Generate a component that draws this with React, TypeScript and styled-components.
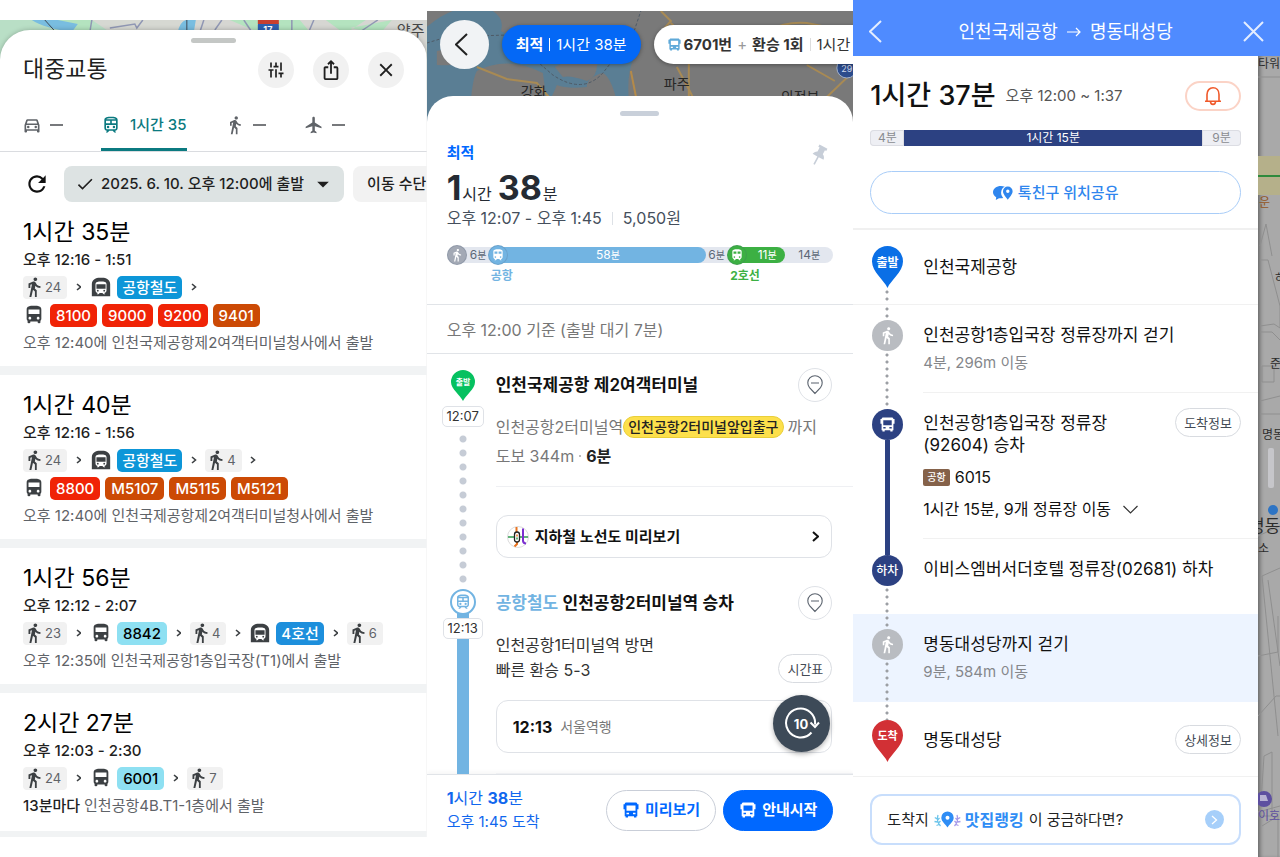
import React from 'react';
import styled, { createGlobalStyle, css } from 'styled-components';
import {
  MdDirectionsWalk,
  MdDirectionsBus,
  MdSubway,
  MdOutlineDirectionsCar,
  MdOutlineTrain,
  MdTrain,
  MdFlight,
  MdRefresh,
  MdCheck,
  MdArrowDropDown,
  MdTune,
  MdIosShare,
  MdClose,
} from 'react-icons/md';

const GlobalStyle = createGlobalStyle`
  *, *::before, *::after { box-sizing: border-box; }
  body {
    margin: 0;
    background: #fff;
    color: #111;
    font-family: Inter, "Noto Sans CJK KR", sans-serif;
    font-size: 15px;
    line-height: 24px;
  }
  button {
    font: inherit;
    color: inherit;
    margin: 0;
    padding: 0;
    border: 0;
    background: none;
    cursor: pointer;
    white-space: nowrap;
  }
  a { color: inherit; text-decoration: none; }
  h1, h2, h3, p, ul, ol { margin: 0; padding: 0; font: inherit; list-style: none; }
  svg { display: block; flex: none; }
`;

const Board = styled.main`
  display: grid;
  grid-template-columns: repeat(3, minmax(0, 1fr));
  min-height: 100vh;
`;

/* ---------- shared ---------- */

const Layers = styled.section<{ $top: number }>`
  display: grid;
  grid-template-columns: minmax(0, 1fr);
  align-content: start;
  padding-top: ${(p) => p.$top}px;
  overflow: hidden;
  > * { grid-area: 1 / 1; }
`;

const MapBand = styled.div<{ $height: number }>`
  height: ${(p) => p.$height}px;
  overflow: hidden;
  svg { width: 100%; height: 100%; }
`;

const Grip = styled.div<{ $color: string; $width: number }>`
  width: ${(p) => p.$width}px;
  height: 5px;
  border-radius: 3px;
  background: ${(p) => p.$color};
  margin: 0 auto;
`;

/* ---------- first panel: route list ---------- */

const ListSheet = styled.div`
  background: #fff;
  margin-top: 10px;
  padding-top: 8px;
  border-radius: 30px 30px 0 0;
  box-shadow: 0 0 5px rgba(0, 0, 0, 0.25);
  clip-path: inset(-10px 0 0 0);
`;

const ListHeader = styled.header`
  display: flex;
  align-items: center;
  gap: 19px;
  padding: 9px 23px 0;
  h1 { flex: 1; padding-bottom: 3px; font-size: 23px; line-height: 32px; color: #1f1f1f; }
`;

const RoundButton = styled.button`
  display: grid;
  place-items: center;
  width: 36px;
  height: 36px;
  border-radius: 50%;
  background: #f1f1f1;
  color: #1f1f1f;
  font-size: 22px;
`;

const Upright = styled.span`
  display: block;
  transform: rotate(90deg);
`;

const ModeTabs = styled.nav`
  display: flex;
  gap: 38px;
  padding: 12px 22px 0;
  border-bottom: 1px solid #dadce0;
`;

const ModeTab = styled.button<{ $active?: boolean }>`
  display: flex;
  align-items: center;
  gap: ${(p) => (p.$active ? 9 : 8)}px;
  height: 51px;
  padding-top: 2px;
  color: ${(p) => (p.$active ? '#0b7a80' : '#5f6368')};
  border-bottom: 3px solid ${(p) => (p.$active ? '#0b7a80' : 'transparent')};
  font-size: 15px;
  font-weight: 500;
  svg { font-size: 20px; }
`;

const Dash = styled.i`
  width: 13px;
  height: 2px;
  background: #77797c;
`;

const FilterRow = styled.div`
  display: flex;
  align-items: center;
  padding: 14px 0 0 24px;
  overflow: hidden;
`;

const RefreshButton = styled.button`
  font-size: 26px;
  margin-right: 14px;
`;

const FilterChip = styled.button<{ $selected?: boolean }>`
  display: flex;
  align-items: center;
  flex: none;
  height: 36px;
  margin-right: 9px;
  padding: 0 ${(p) => (p.$selected ? 7 : 14)}px 0 ${(p) => (p.$selected ? 11 : 14)}px;
  border-radius: 8px;
  background: ${(p) => (p.$selected ? '#dde3e3' : '#f2f2f2')};
  color: #1f1f1f;
  font-weight: 500;
  svg:first-child { font-size: 20px; margin-right: 6px; }
  svg:last-child { font-size: 28px; margin-left: 5px; }
`;

const Route = styled.li`
  padding: 14px 23px 10px;
  border-bottom: 9px solid #f1f3f4;
  &:last-child { border-bottom-width: 6px; padding-bottom: 12px; }
`;

const RouteTime = styled.h2`
  font-size: 23px;
  line-height: 32px;
  color: #000;
`;

const RouteSpan = styled.p`
  color: #1f1f1f;
  font-weight: 500;
  margin-bottom: 1px;
`;

const LegRow = styled.div`
  display: flex;
  align-items: center;
  height: 28px;
  color: #3c4043;
`;

const WalkTag = styled.span`
  display: flex;
  align-items: center;
  height: 23px;
  padding: 0 6px 0 0;
  border-radius: 4px;
  background: #f1f1f1;
  color: #5f6368;
  font-size: 13px;
  svg { font-size: 22px; color: #3c4043; }
`;

const LegArrow = styled.span`
  display: grid;
  place-items: center;
  width: 23px;
`;

const Vehicle = styled.span`
  display: flex;
  align-items: center;
  gap: 5px;
  > svg { font-size: 22px; }
`;

const tones = {
  red: ['#f02306', '#fff'],
  orange: ['#cc4a05', '#fff'],
  rail: ['#0d96d8', '#fff'],
  line4: ['#1d8fdc', '#fff'],
  sky: ['#8ee0f2', '#000'],
};

const LineTag = styled.span<{ $tone: keyof typeof tones; $named: boolean }>`
  height: 23px;
  padding: 0 ${(p) => (p.$named ? 5 : 6)}px;
  border-radius: 5px;
  font-size: 15px;
  line-height: 23px;
  font-weight: 500;
  white-space: nowrap;
  background: ${(p) => tones[p.$tone][0]};
  color: ${(p) => tones[p.$tone][1]};
`;

const RouteNote = styled.p`
  padding-top: 1px;
  line-height: 26px;
  color: #5f6368;
  strong { font-weight: 500; color: #1f1f1f; }
`;

const Chevron = ({ size = 9, stroke = 1.6, flip = false }: { size?: number; stroke?: number; flip?: boolean }) => (
  <svg width={size / 2 + 2} height={size + 1} viewBox={`0 0 ${size / 2 + 2} ${size + 1}`} fill="none" stroke="currentColor" strokeWidth={stroke}>
    <path
      d={
        flip
          ? `M${size / 2 + 1} 1 L1 ${(size + 1) / 2} L${size / 2 + 1} ${size}`
          : `M1 1 L${size / 2 + 1} ${(size + 1) / 2} L1 ${size}`
      }
    />
  </svg>
);

type Leg =
  | { kind: 'walk'; min: number }
  | { kind: 'bus' | 'subway'; lines: [string, keyof typeof tones][] };

interface RouteData {
  total: string;
  span: string;
  rows: Leg[][];
  lead?: string;
  note: string;
}

const routes: RouteData[] = [
  {
    total: '1시간 35분',
    span: '오후 12:16 - 1:51',
    rows: [
      [{ kind: 'walk', min: 24 }, { kind: 'subway', lines: [['공항철도', 'rail']] }],
      [{ kind: 'bus', lines: [['8100', 'red'], ['9000', 'red'], ['9200', 'red'], ['9401', 'orange']] }],
    ],
    note: '오후 12:40에 인천국제공항제2여객터미널청사에서 출발',
  },
  {
    total: '1시간 40분',
    span: '오후 12:16 - 1:56',
    rows: [
      [{ kind: 'walk', min: 24 }, { kind: 'subway', lines: [['공항철도', 'rail']] }, { kind: 'walk', min: 4 }],
      [{ kind: 'bus', lines: [['8800', 'red'], ['M5107', 'orange'], ['M5115', 'orange'], ['M5121', 'orange']] }],
    ],
    note: '오후 12:40에 인천국제공항제2여객터미널청사에서 출발',
  },
  {
    total: '1시간 56분',
    span: '오후 12:12 - 2:07',
    rows: [
      [
        { kind: 'walk', min: 23 },
        { kind: 'bus', lines: [['8842', 'sky']] },
        { kind: 'walk', min: 4 },
        { kind: 'subway', lines: [['4호선', 'line4']] },
        { kind: 'walk', min: 6 },
      ],
    ],
    note: '오후 12:35에 인천국제공항1층입국장(T1)에서 출발',
  },
  {
    total: '2시간 27분',
    span: '오후 12:03 - 2:30',
    rows: [[{ kind: 'walk', min: 24 }, { kind: 'bus', lines: [['6001', 'sky']] }, { kind: 'walk', min: 7 }]],
    lead: '13분마다',
    note: '인천공항4B.T1-1층에서 출발',
  },
];

const LegView = ({ leg }: { leg: Leg }) =>
  leg.kind === 'walk' ? (
    <WalkTag>
      <MdDirectionsWalk />
      {leg.min}
    </WalkTag>
  ) : (
    <Vehicle>
      {leg.kind === 'bus' ? <MdDirectionsBus /> : <MdSubway />}
      {leg.lines.map(([name, tone]) => (
        <LineTag key={name} $tone={tone} $named={leg.kind === 'subway'}>{name}</LineTag>
      ))}
    </Vehicle>
  );

const RouteList = () => (
  <Layers $top={20}>
    <MapBand $height={70}>
      <svg viewBox="0 0 427 70" preserveAspectRatio="xMidYMin slice" aria-hidden="true">
        <rect width="427" height="70" fill="#b9dfc6" />
        <path d="M92 0 L212 0 L212 12 L110 12Z" fill="#d6d8d2" />
        <path d="M58 0 H92 V12 H80Z" fill="#b4e3bf" />
        <path d="M195 0 H427 V70 H195Z" fill="#d6d6d2" />
        <path d="M32 0 Q44 8 72 12 L78 4 L58 0Z M178 12 Q180 2 186 0 L196 0 L194 12Z" fill="#79bde0" />
        <path d="M230 0 L258 12 H310 L300 0Z M326 0 L345 14 L366 0Z M350 8 L392 0 L380 14Z" fill="#b4e3bf" />
        <path d="M92 0 L90 12 M110 8 L135 4 L137 8 L143 0 M200 12 L204 0 M292 0 V14 M308 14 L314 0 M360 12 L378 0 M215 10 L222 0 M244 0 L252 12" fill="none" stroke="#9097b4" strokeWidth="1.5" />
        <path d="M187 0 V12 M45 0 L54 10" stroke="#3f4a55" />
        <rect x="258" y="2" width="21" height="14" rx="3" fill="#2e5fb0" />
        <rect x="258" y="0" width="21" height="4" fill="#c8402f" />
        <text x="268" y="13" fontSize="9" fontWeight="700" textAnchor="middle" fill="#fff">17</text>
        <text x="397" y="16" fontSize="15" fill="#474747">양주</text>
      </svg>
    </MapBand>
    <ListSheet>
      <Grip $color="#c4c7c5" $width={45} />
      <ListHeader>
        <h1>대중교통</h1>
        <RoundButton aria-label="옵션"><Upright><MdTune size={20} /></Upright></RoundButton>
        <RoundButton aria-label="공유"><MdIosShare /></RoundButton>
        <RoundButton aria-label="닫기"><MdClose /></RoundButton>
      </ListHeader>
      <ModeTabs>
        <ModeTab aria-label="자동차"><MdOutlineDirectionsCar /><Dash /></ModeTab>
        <ModeTab $active><MdOutlineTrain />1시간 35</ModeTab>
        <ModeTab aria-label="도보"><MdDirectionsWalk /><Dash /></ModeTab>
        <ModeTab aria-label="항공편"><MdFlight /><Dash /></ModeTab>
      </ModeTabs>
      <FilterRow>
        <RefreshButton aria-label="새로고침"><MdRefresh /></RefreshButton>
        <FilterChip $selected><MdCheck />2025. 6. 10. 오후 12:00에 출발<MdArrowDropDown /></FilterChip>
        <FilterChip>이동 수단</FilterChip>
      </FilterRow>
      <ul>
        {routes.map((r) => (
          <Route key={r.total}>
            <RouteTime>{r.total}</RouteTime>
            <RouteSpan>{r.span}</RouteSpan>
            {r.rows.map((row, i) => (
              <LegRow key={i}>
                {row.map((leg, j) => (
                  <React.Fragment key={j}>
                    {j > 0 && <LegArrow><Chevron size={7} /></LegArrow>}
                    <LegView leg={leg} />
                  </React.Fragment>
                ))}
                {i < r.rows.length - 1 && <LegArrow><Chevron size={7} /></LegArrow>}
              </LegRow>
            ))}
            <RouteNote>{r.lead && <strong>{r.lead} </strong>}{r.note}</RouteNote>
          </Route>
        ))}
      </ul>
    </ListSheet>
  </Layers>
);

/* ---------- second panel: step guide ---------- */

const Guide = styled.div`
  display: flex;
  flex-direction: column;
  min-width: 0;
`;

const GuideTop = styled.div`
  display: flex;
  align-items: center;
  gap: 13px;
  height: 85px;
  padding: 0 0 18px 13px;
  overflow: hidden;
`;

const BackCircle = styled.button`
  display: grid;
  place-items: center;
  flex: none;
  width: 49px;
  height: 49px;
  padding-right: 6px;
  border-radius: 50%;
  background: #f1f3f5;
  color: #222;
`;

const RoutePill = styled.button<{ $active?: boolean }>`
  display: flex;
  align-items: center;
  flex: none;
  gap: ${(p) => (p.$active ? 6 : 5)}px;
  height: 39px;
  padding: 0 ${(p) => (p.$active ? 14 : 40)}px 0 14px;
  border-radius: 20px;
  background: ${(p) => (p.$active ? '#0468f6' : '#fff')};
  color: ${(p) => (p.$active ? '#fff' : '#333')};
  box-shadow: 0 1px 4px rgba(0, 0, 0, 0.35);
  strong { font-weight: 700; }
`;

const PillIcon = styled.span`
  color: #5fa9d8;
  margin-right: -2px;
`;

const Plus = styled.span`
  color: #999;
`;

const Bar = styled.i<{ $color: string; $gap?: number }>`
  width: 1px;
  height: 13px;
  margin: 0 ${(p) => p.$gap ?? 0}px;
  background: ${(p) => p.$color};
`;

const GuideSheet = styled.div`
  flex: 1;
  padding-top: 15px;
  background: #fff;
  border-radius: 26px 26px 0 0;
`;

const GuideSummary = styled.div`
  padding: 27px 20px 21px;
  border-bottom: 1px solid #e1e4e8;
`;

const BestRow = styled.div`
  display: flex;
  justify-content: space-between;
  align-items: center;
  height: 20px;
  color: #c7ced8;
  strong { color: #0068ff; font-weight: 700; }
  svg { margin: 3px 5px 0 0; }
`;

const BigTime = styled.h2`
  display: flex;
  align-items: baseline;
  gap: 1px;
  height: 36px;
  margin-top: 7px;
  line-height: 36px;
  font-size: 16px;
  color: #252b33;
  b { font-size: 34px; font-weight: 700; }
  b + span { margin-right: 5px; }
`;

const TimeFare = styled.p`
  display: flex;
  align-items: center;
  gap: 10px;
  color: #454f5c;
  font-size: 16px;
`;

const Strip = styled.div`
  display: flex;
  margin-top: 15px;
  height: 38px;
`;

const StripPart = styled.div<{ $grow: number; $color: string; $text: string; $first?: boolean; $last?: boolean }>`
  flex: ${(p) => p.$grow} 1 0;
  min-width: 0;
  > div {
    display: flex;
    align-items: center;
    justify-content: center;
    height: 16px;
    margin: 2px 0;
    background: #e3e7ef;
    border-radius: ${(p) => (p.$first ? '8px 0 0 8px' : p.$last ? '0 8px 8px 0' : '0')};
  }
  p {
    display: flex;
    align-items: center;
    justify-content: center;
    flex: 1;
    height: 16px;
    border-radius: ${(p) => (p.$color === 'transparent' ? 0 : '0 8px 8px 0')};
    background: ${(p) => p.$color};
    color: ${(p) => p.$text};
    font-size: 12px;
    white-space: nowrap;
  }
  small { font-size: 10px; }
  > strong {
    display: block;
    margin: 6px 0 0 3px;
    font-size: 12px;
    line-height: 14px;
    font-weight: 700;
    white-space: nowrap;
    color: ${(p) => p.$color};
  }
`;

const StripNode = styled.span<{ $color: string }>`
  display: grid;
  place-items: center;
  flex: none;
  width: 20px;
  height: 20px;
  margin-right: -10px;
  border-radius: 50%;
  border: 1px solid rgba(70, 90, 120, 0.2);
  background: ${(p) => p.$color};
  color: #fff;
  z-index: 1;
  + p { padding-left: 12px; }
`;

const Basis = styled.p`
  height: 49px;
  padding: 0 20px;
  border-bottom: 1px solid #e1e4e8;
  font-size: 16px;
  line-height: 50px;
  color: #777;
`;

const GuideStep = styled.li`
  display: grid;
  grid-template-columns: 42px minmax(0, 1fr);
  column-gap: 12px;
  padding-left: 15px;
`;

const GuideRail = styled.div<{ $line?: boolean }>`
  display: flex;
  flex-direction: column;
  align-items: center;
  padding-top: ${(p) => (p.$line ? 3 : 16)}px;
  ${(p) =>
    p.$line &&
    css`
      background: linear-gradient(#72b4e2, #72b4e2) center 16px / 12px 100% no-repeat;
    `}
`;

const TrainNode = styled.span`
  display: grid;
  place-items: center;
  width: 26px;
  height: 26px;
  border: 2px solid #72b4e2;
  border-radius: 50%;
  background: #fff;
  color: #72b4e2;
`;

const TimeTag = styled.time`
  margin-top: 5px;
  padding: 0 4px;
  border: 1px solid #dfe2e7;
  border-radius: 5px;
  background: #fff;
  font-size: 13px;
  line-height: 19px;
  color: #333;
  ${TrainNode} + & { margin-top: 3px; }
`;

const BigDots = styled.div`
  flex: 1;
  width: 8px;
  margin-top: 5px;
  background: radial-gradient(circle at 4px 7px, #c6ccd6 3px, transparent 4px) 0 0 / 8px 14px repeat-y;
`;

const GuideBody = styled.div<{ $top?: number }>`
  padding-top: ${(p) => p.$top ?? 0}px;
`;

const StepHead = styled.div`
  display: flex;
  align-items: center;
  justify-content: space-between;
  height: 34px;
  padding-right: 21px;
  h3 { font-size: 17px; font-weight: 600; color: #111; }
  h3 span { color: #72b4e2; }
`;

const SpotButton = styled.button`
  display: grid;
  place-items: center;
  width: 34px;
  height: 34px;
  border: 1px solid #dfe2e7;
  border-radius: 50%;
  color: #59616c;
`;

const WalkText = styled.p`
  display: flex;
  align-items: center;
  height: 26px;
  margin-top: 3px;
  font-size: 16px;
  white-space: nowrap;
  color: #777;
  strong { font-weight: 700; color: #222; }
  i { width: 2px; height: 2px; margin: 0 5px; background: #bbb; }
  ${StepHead} + & { margin-top: 12px; }
`;

const Highlight = styled.mark`
  height: 22px;
  margin-right: 4px;
  padding: 0 4px;
  border: 1px solid #e9cf3a;
  border-radius: 11px;
  background: #fde04b;
  color: #222;
  font-size: 14px;
  font-weight: 500;
  line-height: 20px;
`;

const ThinLine = styled.hr<{ $top: number }>`
  height: 1px;
  border: 0;
  margin: ${(p) => p.$top}px 0 0;
  background: #eff0f3;
`;

const MapPreview = styled.button`
  display: flex;
  align-items: center;
  gap: 6px;
  width: calc(100% - 21px);
  height: 43px;
  margin: 28px 0 28px;
  padding: 0 12px 0 10px;
  border: 1px solid #dfe2e7;
  border-radius: 12px;
  color: #111;
  font-weight: 600;
  span { flex: 1; text-align: left; }
`;

const Direction = styled.div`
  display: flex;
  align-items: flex-end;
  justify-content: space-between;
  margin-top: 13px;
  padding-right: 21px;
  font-size: 16px;
  line-height: 25px;
  color: #333;
`;

const OutlinePill = styled.button`
  flex: none;
  height: 29px;
  padding: 0 8px;
  border: 1px solid #d8dbe0;
  border-radius: 15px;
  background: #fff;
  font-size: 13px;
  line-height: 20px;
  color: #444b55;
`;

const TrainCard = styled.div`
  position: relative;
  display: flex;
  align-items: center;
  gap: 8px;
  height: 53px;
  margin: 17px 21px 20px 0;
  padding-left: 16px;
  border: 1px solid #dfe2e7;
  border-radius: 12px;
  font-size: 14px;
  color: #777;
  strong { font-size: 16px; font-weight: 700; color: #111; }
`;

const ReloadFab = styled.button`
  position: absolute;
  right: 1px;
  top: -6px;
  display: grid;
  place-items: center;
  width: 57px;
  height: 57px;
  border-radius: 50%;
  background: #3d4a58;
  color: #fff;
  box-shadow: 0 2px 5px rgba(0, 0, 0, 0.3);
`;

const GuideFooter = styled.footer`
  display: flex;
  align-items: center;
  gap: 7px;
  padding: 12px 20px 22px;
  border-top: 1px solid #e1e4e8;
  box-shadow: 0 -2px 4px rgba(0, 0, 0, 0.04);
  background: #fff;
`;

const Arrival = styled.p`
  flex: 1;
  line-height: 23px;
  color: #1167ee;
  span { display: block; }
  span:first-child { font-size: 16px; }
  b { font-weight: 700; }
`;

const ActionButton = styled.button<{ $solid?: boolean }>`
  display: flex;
  align-items: center;
  gap: 6px;
  height: 41px;
  padding: 0 15px 0 16px;
  border: 1px solid ${(p) => (p.$solid ? '#0068ff' : '#c9ced8')};
  border-radius: 21px;
  background: ${(p) => (p.$solid ? '#0068ff' : '#fff')};
  color: ${(p) => (p.$solid ? '#fff' : '#0068ff')};
  font-weight: 700;
`;

const BusGlyph = ({ size = 16 }: { size?: number }) => (
  <svg width={size} height={size} viewBox="0 0 16 16" fill="currentColor" aria-hidden="true">
    <path fillRule="evenodd" d="M3.500 0.500h9c1.100 0 1.800.7 1.800 1.700H15.500v5h-1.200V14.200h-.9v1.300h-2.400v-1.300H5v1.300H2.600v-1.300h-.9V7.200H.5v-5h1.200c0-1 .7-1.700 1.800-1.700Z M3.500 3.400v5.300h9V3.400Z M3.500 10.700v1.500h2.500v-1.500Z M10 10.700v1.500h2.500v-1.500Z" />
  </svg>
);

const PushPin = () => (
  <svg width="18" height="22" viewBox="0 0 18 22" fill="currentColor" aria-hidden="true">
    <g transform="rotate(28 9 11)">
      <path d="M4.500 1.500H13.500V4H12V8.500C14 9.500 15 11 15.200 13H9.800V21.500H8.200V13H2.800C3 11 4 9.500 6 8.500V4H4.500Z" />
    </g>
  </svg>
);

const DropPin = ({ width, height, color, label, size }: { width: number; height: number; color: string; label: string; size: number }) => (
  <svg width={width} height={height} viewBox={`0 0 ${width} ${height}`}>
    <path
      d={`M${width / 2} ${height} C${width * 0.4} ${height * 0.82} 0 ${height * 0.62} 0 ${width / 2} A${width / 2} ${width / 2} 0 0 1 ${width} ${width / 2} C${width} ${height * 0.62} ${width * 0.6} ${height * 0.82} ${width / 2} ${height}Z`}
      fill={color}
    />
    <text x={width / 2} y={width / 2 + size * 0.42} fontSize={size} fontWeight="700" textAnchor="middle" fill="#fff">{label}</text>
  </svg>
);

const SpotGlyph = () => (
  <svg width="18" height="20" viewBox="0 0 18 20" fill="none" stroke="currentColor" strokeWidth="1.100">
    <path d="M9 18.500 L3.500 12.600 A7.200 7.200 0 1 1 14.500 12.600Z M5 8h8" />
  </svg>
);

const MetroGlyph = () => (
  <svg width="22" height="22" viewBox="0 0 22 22" fill="none">
    <circle cx="11" cy="11" r="10.500" fill="#fff" stroke="#dcdcdc" />
    <path d="M1 11H21" stroke="#2e9a4c" strokeWidth="1.500" />
    <path d="M9.500 1V6 M10 15V18L7.500 20.500" stroke="#e8731f" strokeWidth="2" />
    <path d="M16 2.500V15Q16.500 17.500 19 17.500" stroke="#7b2fd0" strokeWidth="2" />
    <rect x="7.500" y="6" width="5" height="10" rx="2.500" fill="#fff" stroke="#222" strokeWidth="1.300" />
    <path d="M10 8.500v2" stroke="#e8731f" strokeWidth="1.500" />
    <path d="M10 11.500v2" stroke="#2e9a4c" strokeWidth="1.500" />
  </svg>
);

const parts = [
  { grow: 41, color: 'transparent', text: '#5c6776', n: 6, node: '#a3a9b5', icon: 'walk', first: true },
  { grow: 218, color: '#72b4e2', text: '#fff', n: 58, node: '#72b4e2', icon: 'train', label: '공항' },
  { grow: 21, color: 'transparent', text: '#5c6776', n: 6 },
  { grow: 58, color: '#3cb043', text: '#fff', n: 11, node: '#3cb043', icon: 'train', label: '2호선' },
  { grow: 48, color: 'transparent', text: '#5c6776', n: 14, last: true },
];

const StepGuide = () => (
  <Layers $top={11}>
    <MapBand $height={120}>
      <svg viewBox="0 0 427 120" preserveAspectRatio="xMidYMin slice" aria-hidden="true">
        <rect width="427" height="120" fill="#797979" />
        <path d="M0 16 Q14 4 26 0 H66 Q78 8 74 20 Q96 34 124 32 Q160 40 200 30 L206 50 Q200 62 202 90 H190 Q184 66 176 62 Q160 66 160 76 Q140 78 130 74 Q124 90 120 90 L116 62 Q80 44 50 60 Q44 70 42 120 H0Z" fill="#5a7e94" />
        <path d="M128 56 Q150 44 170 48 Q172 66 160 70 Q144 64 136 66Z M10 40 Q30 36 40 46 Q34 56 10 54Z" fill="#797979" />
        <path d="M0 32 L20 26 L80 24 L126 64 Q156 84 176 62 L206 24 L214 0" fill="none" stroke="#4e5a66" strokeDasharray="3 2" />
        <path d="M50 56 L80 68 L110 72 L122 86 M234 0 L244 10 L230 26 M244 12 L262 30 V90 M340 20 Q360 10 380 12 L420 20 M400 86 L427 60 M250 56 Q260 74 268 90 M380 54 L408 70" fill="none" stroke="#a88a54" strokeWidth="2" />
        <path d="M204 60 L210 90" stroke="#b48a4a" strokeWidth="2" />
        <circle cx="420" cy="57" r="10" fill="#2c4c8c" stroke="#9fb0cc" />
        <text x="420" y="61" fontSize="9" textAnchor="middle" fill="#cfd8ea">29</text>
        <g fontSize="14" fill="#262626">
          <text x="94" y="86">강화</text>
          <text x="237" y="78">파주</text>
          <text x="354" y="91">의정부</text>
        </g>
      </svg>
    </MapBand>
    <Guide>
      <GuideTop>
        <BackCircle aria-label="뒤로"><Chevron size={22} stroke={2} flip /></BackCircle>
        <RoutePill $active><strong>최적</strong><Bar $color="#fff" />1시간 38분</RoutePill>
        <RoutePill>
          <PillIcon><BusGlyph size={13} /></PillIcon>
          <strong>6701번</strong><Plus>+</Plus><strong>환승 1회</strong>
          <Bar $color="#ddd" $gap={1} />1시간
        </RoutePill>
      </GuideTop>
      <GuideSheet>
        <Grip $color="#c9d0da" $width={39} />
        <GuideSummary>
          <BestRow><strong>최적</strong><PushPin /></BestRow>
          <BigTime><b>1</b><span>시간</span><b>38</b><span>분</span></BigTime>
          <TimeFare>오후 12:07 - 오후 1:45<Bar $color="#dde1e6" />5,050원</TimeFare>
          <Strip>
            {parts.map((p, i) => (
              <StripPart key={i} $grow={p.grow} $color={p.color} $text={p.text} $first={p.first} $last={p.last}>
                <div>
                  {p.node && (
                    <StripNode $color={p.node}>{p.icon === 'walk' ? <MdDirectionsWalk size={14} /> : <MdTrain size={14} />}</StripNode>
                  )}
                  <p>{p.n}<small>분</small></p>
                </div>
                {p.label && <strong>{p.label}</strong>}
              </StripPart>
            ))}
          </Strip>
        </GuideSummary>
        <Basis>오후 12:00 기준 (출발 대기 7분)</Basis>
        <ol>
          <GuideStep>
            <GuideRail>
              <DropPin width={24} height={31} color="#06c160" label="출발" size={8} />
              <TimeTag>12:07</TimeTag>
              <BigDots />
            </GuideRail>
            <GuideBody $top={14}>
              <StepHead>
                <h3>인천국제공항 제2여객터미널</h3>
                <SpotButton aria-label="위치 보기"><SpotGlyph /></SpotButton>
              </StepHead>
              <WalkText>인천공항2터미널역<Highlight>인천공항2터미널앞입출구</Highlight>까지</WalkText>
              <WalkText>도보 344m<i /><strong>6분</strong></WalkText>
              <ThinLine $top={17} />
              <MapPreview><MetroGlyph /><span>지하철 노선도 미리보기</span><Chevron size={10} stroke={2} /></MapPreview>
            </GuideBody>
          </GuideStep>
          <GuideStep>
            <GuideRail $line>
              <TrainNode><MdOutlineTrain size={18} /></TrainNode>
              <TimeTag>12:13</TimeTag>
            </GuideRail>
            <GuideBody>
              <StepHead>
                <h3><span>공항철도</span> 인천공항2터미널역 승차</h3>
                <SpotButton aria-label="위치 보기"><SpotGlyph /></SpotButton>
              </StepHead>
              <Direction>
                <p>인천공항1터미널역 방면<br />빠른 환승 5-3</p>
                <OutlinePill>시간표</OutlinePill>
              </Direction>
              <TrainCard>
                <strong>12:13</strong>서울역행
                <ReloadFab aria-label="10초 새로고침">
                  <svg width="36" height="34" viewBox="0 0 36 34" fill="none" stroke="currentColor" strokeWidth="2">
                    <path d="M27.500 25.500 A14.500 14.500 0 1 1 31 17.500 M26.500 15.500 L31 20 L35 15.500" />
                    <text x="17" y="22" fontSize="13" fontWeight="700" textAnchor="middle" fill="#fff" stroke="none">10</text>
                  </svg>
                </ReloadFab>
              </TrainCard>
              <ThinLine $top={0} />
            </GuideBody>
          </GuideStep>
        </ol>
        <GuideFooter>
          <Arrival><span><b>1</b>시간 <b>38</b>분</span><span>오후 1:45 도착</span></Arrival>
          <ActionButton><BusGlyph />미리보기</ActionButton>
          <ActionButton $solid><BusGlyph />안내시작</ActionButton>
        </GuideFooter>
      </GuideSheet>
    </Guide>
  </Layers>
);

/* ---------- third panel: itinerary ---------- */

const Itinerary = styled.section`
  display: flex;
  flex-direction: column;
`;

const BlueHeader = styled.header`
  display: flex;
  align-items: center;
  justify-content: space-between;
  height: 56px;
  padding: 7px 16px 0;
  background: #4f8bff;
  color: #e4edff;
  h2 { display: flex; align-items: center; gap: 9px; padding-left: 6px; font-size: 18px; color: #fff; }
`;

const ItineraryBody = styled.div`
  display: flex;
  flex: 1;
`;

const ItineraryMain = styled.div`
  flex: 1;
  min-width: 0;
  background: #fff;
`;

const SideMap = styled.div`
  flex: none;
  width: 22px;
  overflow: hidden;
  background: #a9a9a9;
  box-shadow: inset 4px 0 4px -2px rgba(0, 0, 0, 0.4);
`;

const TripSummary = styled.div`
  padding: 25px 17px 14px;
  border-bottom: 2px solid #f0f0f0;
`;

const TripTitle = styled.div`
  display: flex;
  align-items: center;
  gap: 10px;
  height: 30px;
  h1 { font-size: 27px; font-weight: 500; color: #111; white-space: nowrap; }
  p { flex: 1; color: #555; white-space: nowrap; }
`;

const BellButton = styled.button`
  display: grid;
  place-items: center;
  width: 56px;
  height: 30px;
  border: 2px solid #fbd3c6;
  border-radius: 15px;
  color: #f0592a;
`;

const TripBar = styled.div`
  display: flex;
  height: 16px;
  margin-top: 19px;
  font-size: 12px;
  line-height: 16px;
  text-align: center;
`;

const TripSegment = styled.span<{ $grow: number; $ride?: boolean }>`
  flex: ${(p) => p.$grow} 1 0;
  background: ${(p) => (p.$ride ? '#2c4182' : '#eeeff4')};
  color: ${(p) => (p.$ride ? '#fff' : '#8a8c91')};
  box-shadow: ${(p) => (p.$ride ? 'none' : 'inset 0 0 0 1px #dcdde3')};
  &:first-child { border-radius: 4px 0 0 4px; }
  &:last-child { border-radius: 0 4px 4px 0; }
`;

const ShareButton = styled.button`
  display: flex;
  align-items: center;
  justify-content: center;
  gap: 5px;
  width: 100%;
  height: 43px;
  margin-top: 25px;
  border: 1px solid #a9cdf8;
  border-radius: 22px;
  color: #2f86ee;
  font-weight: 500;
`;

const Stop = styled.li<{ $tinted?: boolean; $line?: boolean }>`
  display: grid;
  grid-template-columns: 34px minmax(0, 1fr);
  column-gap: 19px;
  padding-left: 17px;
  background: ${(p) => (p.$tinted ? '#edf4ff' : '#fff')};
  border-bottom: ${(p) => (p.$line ? '1px solid #f1f1f1' : '0')};
`;

const StopRail = styled.div`
  display: flex;
  flex-direction: column;
  align-items: center;
`;

const Track = styled.div<{ $kind?: 'dots' | 'solid'; $height?: number }>`
  flex: ${(p) => (p.$height ? 'none' : 1)};
  height: ${(p) => (p.$height ? `${p.$height}px` : 'auto')};
  width: ${(p) => (p.$kind === 'solid' ? 5 : 4)}px;
  background: ${(p) =>
    p.$kind === 'solid'
      ? '#2c4182'
      : p.$kind === 'dots'
        ? 'radial-gradient(circle at 2px 4px, #9c9fa4 1px, transparent 2px) 0 0 / 4px 7px repeat-y'
        : 'none'};
`;

const StopNode = styled.span<{ $color: string }>`
  display: grid;
  place-items: center;
  flex: none;
  width: 31px;
  height: 31px;
  border-radius: 50%;
  background: ${(p) => p.$color};
  color: #fff;
  font-size: 12px;
  font-weight: 500;
`;

const StopBody = styled.div<{ $top: number; $bottom: number; $line?: boolean }>`
  display: flex;
  justify-content: space-between;
  align-items: flex-start;
  padding: ${(p) => p.$top}px 17px ${(p) => p.$bottom}px 0;
  border-bottom: ${(p) => (p.$line ? '1px solid #f1f1f1' : '0')};
  h3 { font-size: 17px; line-height: 22px; color: #111; }
  h3 + p { margin-top: 7px; line-height: 20px; color: #85878b; }
`;

const BusLine = styled.div`
  display: flex;
  align-items: center;
  gap: 5px;
  height: 20px;
  margin-top: 11px;
  font-size: 16px;
  span {
    padding: 0 4px;
    border-radius: 2px;
    background: #85624a;
    color: #fff;
    font-size: 10px;
    font-weight: 500;
    line-height: 17px;
  }
`;

const StopsToggle = styled.button`
  display: flex;
  align-items: center;
  gap: 12px;
  height: 22px;
  margin-top: 11px;
  font-size: 16px;
  color: #111;
`;

const InfoPill = styled(OutlinePill)`
  margin-top: -4px;
`;

const RankCard = styled.a`
  display: flex;
  align-items: center;
  height: 51px;
  margin: 17px 17px 11px;
  padding: 0 15px;
  border: 2px solid #c8defc;
  border-radius: 12px;
  color: #222;
  white-space: nowrap;
  svg { margin: 0 4px 0 5px; }
  strong { margin-right: 5px; font-size: 16px; font-weight: 700; color: #2f8df5; }
  > span { flex: 1; }
`;

const GoDot = styled.i`
  display: grid;
  place-items: center;
  width: 19px;
  height: 19px;
  border-radius: 50%;
  background: #a6cffa;
  color: #fff;
  && svg { margin: 0; }
`;

const TripItinerary = () => (
  <Itinerary>
    <BlueHeader>
      <button aria-label="뒤로"><Chevron size={22} stroke={2} flip /></button>
      <h2>
        인천국제공항
        <svg width="14" height="12" viewBox="0 0 14 12" fill="none" stroke="#fff" strokeWidth="1.200"><path d="M0 6H13 M9 2L13 6L9 10" /></svg>
        명동대성당
      </h2>
      <button aria-label="닫기">
        <svg width="21" height="21" viewBox="0 0 21 21" fill="none" stroke="currentColor" strokeWidth="2"><path d="M1 1L20 20 M20 1L1 20" /></svg>
      </button>
    </BlueHeader>
    <ItineraryBody>
      <ItineraryMain>
        <TripSummary>
          <TripTitle>
            <h1>1시간 37분</h1>
            <p>오후 12:00 ~ 1:37</p>
            <BellButton aria-label="알림">
              <svg width="18" height="20" viewBox="0 0 18 20" fill="none" stroke="currentColor" strokeWidth="1.600">
                <path d="M1 15.200H17 M3 15V8.500C3 4.500 5.500 1.800 9 1.800S15 4.500 15 8.500V15 M6.500 15.500C6.500 19.300 11.500 19.300 11.500 15.500" />
              </svg>
            </BellButton>
          </TripTitle>
          <TripBar>
            <TripSegment $grow={34}>4분</TripSegment>
            <TripSegment $grow={297} $ride>1시간 15분</TripSegment>
            <TripSegment $grow={39}>9분</TripSegment>
          </TripBar>
          <ShareButton>
            <svg width="20" height="16" viewBox="0 0 20 16" fill="currentColor">
              <path d="M8 1C3.500 1 0 3.600 0 7.200C0 9.300 1.300 11.100 3.200 12.200L2.800 15L6 13.200C7.500 13.500 9 13.300 10.200 12.900C8 10.500 7.800 8 8.400 5.800C9 3.600 10.400 2.300 11.800 1.800C10.700 1.300 9.400 1 8 1Z" />
              <path fillRule="evenodd" d="M14.800 1.500A4.700 4.700 0 0 0 10 6.300C10 9.500 13 12 14.800 14.800C16.600 12 19.600 9.500 19.600 6.300A4.700 4.700 0 0 0 14.800 1.500Z M14.800 4.600a1.700 1.700 0 1 1 0 3.400a1.700 1.700 0 1 1 0-3.400Z" />
            </svg>
            톡친구 위치공유
          </ShareButton>
        </TripSummary>
        <ol>
          <Stop $line>
            <StopRail>
              <Track $height={16} />
              <DropPin width={31} height={42} color="#0a6fe6" label="출발" size={12} />
              <Track $kind="dots" />
            </StopRail>
            <StopBody $top={26} $bottom={26}><h3>인천국제공항</h3></StopBody>
          </Stop>
          <Stop>
            <StopRail>
              <Track $kind="dots" $height={15} />
              <StopNode $color="#b9bcc1"><MdDirectionsWalk size={19} /></StopNode>
              <Track $kind="dots" />
            </StopRail>
            <StopBody $top={19} $bottom={19} $line>
              <div><h3>인천공항1층입국장 정류장까지 걷기</h3><p>4분, 296m 이동</p></div>
            </StopBody>
          </Stop>
          <Stop>
            <StopRail>
              <Track $kind="dots" $height={16} />
              <StopNode $color="#2c4182"><BusGlyph size={15} /></StopNode>
              <Track $kind="solid" />
            </StopRail>
            <StopBody $top={19} $bottom={18} $line>
              <div>
                <h3>인천공항1층입국장 정류장<br />(92604) 승차</h3>
                <BusLine><span>공항</span>6015</BusLine>
                <StopsToggle>
                  1시간 15분, 9개 정류장 이동
                  <svg width="15" height="9" viewBox="0 0 15 9" fill="none" stroke="#333" strokeWidth="1.200"><path d="M0.500 1L7.500 8L14.500 1" /></svg>
                </StopsToggle>
              </div>
              <InfoPill>도착정보</InfoPill>
            </StopBody>
          </Stop>
          <Stop>
            <StopRail>
              <Track $kind="solid" $height={16} />
              <StopNode $color="#2c4182">하차</StopNode>
              <Track $kind="dots" />
            </StopRail>
            <StopBody $top={19} $bottom={34}><h3>이비스엠버서더호텔 정류장(02681) 하차</h3></StopBody>
          </Stop>
          <Stop $tinted>
            <StopRail>
              <Track $kind="dots" $height={15} />
              <StopNode $color="#b9bcc1"><MdDirectionsWalk size={19} /></StopNode>
              <Track $kind="dots" />
            </StopRail>
            <StopBody $top={19} $bottom={20}>
              <div><h3>명동대성당까지 걷기</h3><p>9분, 584m 이동</p></div>
            </StopBody>
          </Stop>
          <Stop $line>
            <StopRail>
              <Track $kind="dots" $height={18} />
              <DropPin width={31} height={42} color="#d23035" label="도착" size={11} />
            </StopRail>
            <StopBody $top={27} $bottom={22}><h3>명동대성당</h3><InfoPill>상세정보</InfoPill></StopBody>
          </Stop>
        </ol>
        <RankCard href="#ranking">
          도착지
          <svg width="27" height="17" viewBox="0 0 27 17" fill="none">
            <path fillRule="evenodd" d="M13.500 0.500A6.200 6.200 0 0 0 7.300 6.700C7.300 10.500 11.500 13 13.500 16.500C15.500 13 19.700 10.500 19.700 6.700A6.200 6.200 0 0 0 13.500 0.500Z M13.500 4.700a2 2 0 1 1 0 4a2 2 0 1 1 0-4Z" fill="#2f8df5" />
            <path d="M4 4Q2 10 6.500 15 M3.200 8L0.800 6.500 M3.600 11L0.500 10.500 M5 13.500L2.500 14.500 M3.600 9L5.500 7 M4.500 12L6.500 10" stroke="#6cc4ea" strokeWidth="1.300" />
            <path d="M23 4Q25 10 20.500 15 M23.800 8L26.200 6.500 M23.400 11L26.500 10.500 M22 13.500L24.500 14.500 M23.400 9L21.500 7 M22.500 12L20.500 10" stroke="#a79be8" strokeWidth="1.300" />
          </svg>
          <strong>맛집랭킹</strong>
          <span>이 궁금하다면?</span>
          <GoDot><Chevron size={9} stroke={1.3} /></GoDot>
        </RankCard>
      </ItineraryMain>
      <SideMap>
        <svg width="22" height="801" viewBox="0 0 22 801" aria-hidden="true">
          <g fill="none" stroke="#8f8f8f">
            <path d="M0 21H22 M2 190L8 168L14 200 M2 204H10L22 250V272L16 268L2 270 M2 276H14L22 284 M4 310H16V326H4Z M2 345L22 340 M2 358H22 M0 480L22 470 M4 520L22 512 M4 520L20 680 M10 524L22 610 M0 600L20 596V560 M0 660L18 640H22 M6 700L14 696V760H2Z M0 756L22 750 M4 770L20 760V801" />
          </g>
          <rect y="100" width="22" height="39" fill="#b5b08a" />
          <path d="M0 120H22" stroke="#2e8a3c" strokeWidth="2" />
          <rect x="10" y="392" width="6" height="40" rx="2" fill="#c6c6ca" />
          <circle cx="15" cy="454" r="5" fill="#2d74c4" />
          <circle cx="6" cy="743" r="8" fill="#5d4fa0" />
          <path d="M2 739H8L10 745H2Z" fill="#b8b2d4" />
          <g fontSize="12" fill="#2c2c2c">
            <text x="0" y="12">타워</text>
            <text x="1" y="151" fill="#93561f">운</text>
            <text x="17" y="227">하</text>
            <text x="12" y="312">준</text>
            <text x="4" y="383">명동</text>
            <text x="0" y="497">소</text>
            <text x="-9" y="476" fontSize="17">명동</text>
            <text x="0" y="764" fill="#5d4fa0">이호</text>
          </g>
        </svg>
      </SideMap>
    </ItineraryBody>
  </Itinerary>
);

export default function App() {
  return (
    <>
      <GlobalStyle />
      <Board>
        <RouteList />
        <StepGuide />
        <TripItinerary />
      </Board>
    </>
  );
}
